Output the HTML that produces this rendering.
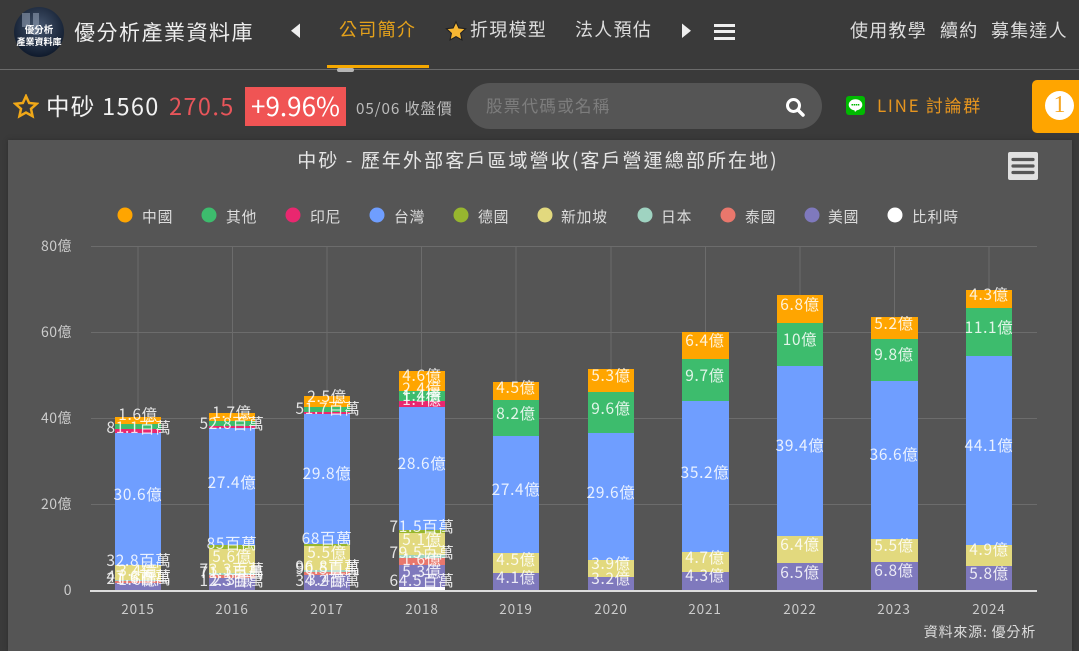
<!DOCTYPE html>
<html lang="zh-Hant"><head><meta charset="utf-8"><title>中砂</title>
<style>
*{box-sizing:border-box}
html,body{margin:0;padding:0;width:1079px;height:651px;overflow:hidden;background:#3a3a3a;}
.a{position:absolute;white-space:nowrap;line-height:1}
body{position:relative;font-family:"Noto Sans CJK TC","Liberation Sans",sans-serif}
svg text{font-family:"Noto Sans CJK TC","Liberation Sans",sans-serif}
</style></head><body>
<svg class="a" style="left:13px;top:7px" width="52" height="50" viewBox="0 0 52 50">
<defs><radialGradient id="g" cx="50%" cy="40%" r="60%"><stop offset="0" stop-color="#46566f"/><stop offset="1" stop-color="#0f1a2c"/></radialGradient></defs>
<circle cx="26" cy="25" r="25" fill="url(#g)"/><path d="M9 20h8v-14h-8zM20 28h6v-22h-6z" fill="#8f9db0" opacity=".6"/>
<text x="26" y="26" font-size="9.500" font-weight="700" fill="#fff" text-anchor="middle">優分析</text>
<text x="26" y="38" font-size="9" font-weight="700" fill="#fff" text-anchor="middle">產業資料庫</text></svg>
<div class="a" style="left:74px;top:22px;font-size:21px;letter-spacing:1.500px;color:#eee">優分析產業資料庫</div>
<svg class="a" style="left:290px;top:23px" width="11" height="16"><path d="M10 0.500V15L1 7.700z" fill="#eee"/></svg>
<div class="a" style="left:339px;top:20px;font-size:18px;letter-spacing:1.300px;color:#e4a11b">公司簡介</div>
<div class="a" style="left:327px;top:65px;width:102px;height:3px;background:#f5a800"></div>
<svg class="a" style="left:445px;top:20px" width="22" height="22" viewBox="0 0 24 24"><path d="M12 2l3.100 6.700 7.400.800-5.500 5 1.500 7.300L12 18.200l-6.500 3.600 1.500-7.300-5.500-5 7.400-.800z" fill="#f7b733" stroke="#222" stroke-width="1.200"/></svg>
<div class="a" style="left:470px;top:20px;font-size:18px;letter-spacing:1.300px;color:#ddd">折現模型</div>
<div class="a" style="left:575px;top:20px;font-size:18px;letter-spacing:1.300px;color:#ddd">法人預估</div>
<svg class="a" style="left:681px;top:23px" width="11" height="16"><path d="M1 0.500V15L10 7.700z" fill="#eee"/></svg>
<div class="a" style="left:714px;top:24px;width:21px;height:3px;background:#eee"></div>
<div class="a" style="left:714px;top:30px;width:21px;height:3px;background:#eee"></div>
<div class="a" style="left:714px;top:37px;width:21px;height:3px;background:#eee"></div>
<div class="a" style="left:850px;top:21px;font-size:18px;letter-spacing:1.200px;color:#ddd">使用教學</div>
<div class="a" style="left:940px;top:21px;font-size:18px;letter-spacing:1.200px;color:#ddd">續約</div>
<div class="a" style="left:991px;top:21px;font-size:18px;letter-spacing:1.200px;color:#ddd">募集達人</div>
<div class="a" style="left:0;top:69px;width:1079px;height:1px;background:#6b6b6b"></div>
<div class="a" style="left:337px;top:68px;width:17px;height:4px;border-radius:2px;background:#b5b5b5"></div>

<svg class="a" style="left:13px;top:94px" width="26" height="25" viewBox="0 0 24 24"><path d="M12 2l3 6.600 7.200.800-5.400 4.800 1.500 7.100L12 17.800l-6.300 3.500 1.500-7.100L1.800 9.400 9 8.600z" fill="none" stroke="#f0a818" stroke-width="2.400"/></svg>
<div class="a" style="left:46px;top:94px;font-size:23.500px;letter-spacing:1.300px;color:#f2f2f2">中砂 1560</div>
<div class="a" style="left:169px;top:94px;font-size:23.500px;letter-spacing:1.400px;color:#e8555a">270.5</div>
<div class="a" style="left:245px;top:87px;width:101px;height:39px;background:#f05454;color:#fff;font-size:26px;line-height:38px;text-align:center">+9.96%</div>
<div class="a" style="left:356px;top:101px;font-size:15.200px;letter-spacing:.9px;color:#bbb">05/06 收盤價</div>
<div class="a" style="left:467px;top:83px;width:355px;height:46px;border-radius:23px;background:#555"></div>
<div class="a" style="left:486px;top:97px;font-size:16.500px;letter-spacing:1.300px;color:#7d7d7d">股票代碼或名稱</div>
<svg class="a" style="left:785px;top:97px" width="20" height="20" viewBox="0 0 20 20"><circle cx="8.500" cy="8.500" r="6" fill="none" stroke="#fff" stroke-width="3"/><path d="M13 13l5 5" stroke="#fff" stroke-width="3.500" stroke-linecap="round"/></svg>
<svg class="a" style="left:846px;top:96px" width="19" height="19" viewBox="0 0 19 19"><rect width="19" height="19" rx="3" fill="#00b900"/><ellipse cx="9.500" cy="8.800" rx="6.800" ry="5.500" fill="#fff"/><path d="M8 13l1 3 3-3z" fill="#fff"/><path d="M5.500 8.800h8" stroke="#00b900" stroke-width="1.500" stroke-dasharray="1.500 .6"/></svg>
<div class="a" style="left:877px;top:96px;font-size:17px;letter-spacing:1.700px;color:#e6951f">LINE 討論群</div>
<div class="a" style="left:1032px;top:80px;width:47px;height:53px;border-radius:5px 0 0 5px;background:#ffa500"></div>
<div class="a" style="left:1045px;top:91px;width:29px;height:29px;border-radius:50%;background:#fff;color:#f5a623;font-size:24px;line-height:29px;text-align:center;font-family:'Liberation Serif',serif">1</div>

<div class="a" style="left:8px;top:140px;width:1064px;height:511px;background:#555;box-shadow:0 0 4px #2c2c2c"></div>
<svg class="a" style="left:0;top:0" width="1079" height="651" viewBox="0 0 1079 651">
<text x="538" y="167" font-size="19" letter-spacing="2.100" fill="#e6e6e6" text-anchor="middle">中砂 - 歷年外部客戶區域營收(客戶營運總部所在地)</text>
<rect x="1008" y="152" width="30" height="28" rx="2" fill="#e0e0e0"/>
<path d="M1013 159.500h20M1013 166h20M1013 172.500h20" stroke="#555" stroke-width="3.200" stroke-linecap="round"/>
<g font-size="14.800" fill="#ddd" letter-spacing=".8">
<circle cx="125" cy="215" r="7.500" fill="#ffa500"/><text x="142" y="222">中國</text>
<circle cx="209" cy="215" r="7.500" fill="#3dbc6d"/><text x="226" y="222">其他</text>
<circle cx="293" cy="215" r="7.500" fill="#e9276f"/><text x="310" y="222">印尼</text>
<circle cx="377" cy="215" r="7.500" fill="#6f9eff"/><text x="394" y="222">台灣</text>
<circle cx="461" cy="215" r="7.500" fill="#97b62f"/><text x="478" y="222">德國</text>
<circle cx="545" cy="215" r="7.500" fill="#e2d97e"/><text x="561" y="222">新加坡</text>
<circle cx="645" cy="215" r="7.500" fill="#9fd3c1"/><text x="661" y="222">日本</text>
<circle cx="728" cy="215" r="7.500" fill="#e9776c"/><text x="745" y="222">泰國</text>
<circle cx="812" cy="215" r="7.500" fill="#7f79bd"/><text x="828" y="222">美國</text>
<circle cx="895" cy="215" r="7.500" fill="#fff"/><text x="912" y="222">比利時</text>
</g>
<g stroke="#6c6c6c" stroke-width="1">
<path d="M91 246.500H1037M91 332.500H1037M91 418.500H1037M91 504.500H1037"/>
<path d="M138 246V590M232.500 246V590M327 246V590M421.500 246V590M516 246V590M611 246V590M705.500 246V590M800 246V590M894.500 246V590M989 246V590"/>
</g>
<g font-size="14" fill="#ccc" text-anchor="end" letter-spacing=".5">
<text x="72" y="251">80億</text><text x="72" y="337">60億</text><text x="72" y="423">40億</text><text x="72" y="509">20億</text><text x="72" y="595">0</text>
</g>
<g fill="#ffa500">
<rect x="115" y="417" width="46" height="7"/><rect x="209" y="413" width="46" height="8"/><rect x="304" y="396" width="46" height="11"/><rect x="399" y="371" width="46" height="20"/><rect x="493" y="382" width="46" height="18"/><rect x="588" y="369" width="46" height="23"/><rect x="682" y="332" width="47" height="27"/><rect x="777" y="295" width="46" height="28"/><rect x="871" y="317" width="47" height="22"/><rect x="966" y="290" width="46" height="18"/>
</g>
<g fill="#3dbc6d">
<rect x="115" y="424" width="46" height="5"/><rect x="209" y="421" width="46" height="5"/><rect x="304" y="407" width="46" height="5"/><rect x="399" y="391" width="46" height="10"/><rect x="493" y="400" width="46" height="36"/><rect x="588" y="392" width="46" height="41"/><rect x="682" y="359" width="47" height="42"/><rect x="777" y="323" width="46" height="43"/><rect x="871" y="339" width="47" height="42"/><rect x="966" y="308" width="46" height="48"/>
</g>
<g fill="#e9276f">
<rect x="115" y="429" width="46" height="4"/><rect x="209" y="426" width="46" height="2"/><rect x="304" y="412" width="46" height="2"/><rect x="399" y="401" width="46" height="6"/>
</g>
<g fill="#6f9eff">
<rect x="115" y="433" width="46" height="132"/><rect x="209" y="428" width="46" height="117"/><rect x="304" y="414" width="46" height="130"/><rect x="399" y="407" width="46" height="123"/><rect x="493" y="436" width="46" height="117"/><rect x="588" y="433" width="46" height="127"/><rect x="682" y="401" width="47" height="151"/><rect x="777" y="366" width="46" height="170"/><rect x="871" y="381" width="47" height="158"/><rect x="966" y="356" width="46" height="189"/>
</g>
<g fill="#97b62f"><rect x="209" y="545" width="46" height="4"/><rect x="304" y="544" width="46" height="2"/><rect x="399" y="530" width="46" height="3"/></g>
<g fill="#e2d97e">
<rect x="115" y="565" width="46" height="15"/><rect x="209" y="549" width="46" height="24"/><rect x="304" y="546" width="46" height="24"/><rect x="399" y="533" width="46" height="22"/><rect x="493" y="553" width="46" height="20"/><rect x="588" y="560" width="46" height="17"/><rect x="682" y="552" width="47" height="20"/><rect x="777" y="536" width="46" height="27"/><rect x="871" y="539" width="47" height="23"/><rect x="966" y="545" width="46" height="21"/>
</g>
<g fill="#9fd3c1"><rect x="115" y="580" width="46" height="1"/><rect x="209" y="573" width="46" height="2"/><rect x="304" y="570" width="46" height="2"/><rect x="399" y="555" width="46" height="3"/></g>
<g fill="#e9776c"><rect x="115" y="581" width="46" height="2"/><rect x="209" y="575" width="46" height="3"/><rect x="304" y="572" width="46" height="3"/><rect x="399" y="558" width="46" height="7"/></g>
<g fill="#7f79bd">
<rect x="115" y="583" width="46" height="7"/><rect x="209" y="578" width="46" height="12"/><rect x="304" y="575" width="46" height="15"/><rect x="399" y="565" width="46" height="22"/><rect x="493" y="573" width="46" height="17"/><rect x="588" y="577" width="46" height="13"/><rect x="682" y="572" width="47" height="18"/><rect x="777" y="563" width="46" height="27"/><rect x="871" y="562" width="47" height="28"/><rect x="966" y="566" width="46" height="24"/>
</g>
<rect x="399" y="587" width="46" height="3" fill="#fff"/>
<rect x="90" y="590" width="947" height="2" fill="#dcdcdc"/>
<g font-size="15.400" fill="#fff" fill-opacity=".85" text-anchor="middle" letter-spacing=".7">
<text x="138" y="420">1.6億</text><text x="139" y="433">81.1百萬</text><text x="138" y="500">30.6億</text><text x="139" y="566">32.8百萬</text><text x="138" y="576">3.4億</text><text x="139" y="582">47.6百萬</text><text x="139" y="584">21.6百萬</text><text x="138" y="585">1.6億</text>
<text x="232" y="418">1.7億</text><text x="232" y="429">52.8百萬</text><text x="232" y="488">27.4億</text><text x="232" y="549">85百萬</text><text x="232" y="562">5.6億</text><text x="232" y="575">73.3百萬</text><text x="232" y="578">71.1百萬</text><text x="232" y="586">12.3百萬</text><text x="232" y="585">2.3億</text>
<text x="327" y="402">2.5億</text><text x="328" y="414">51.7百萬</text><text x="327" y="479">29.8億</text><text x="327" y="544">68百萬</text><text x="327" y="558">5.5億</text><text x="328" y="572">96.8百萬</text><text x="328" y="574">90.5百萬</text><text x="328" y="586">34.2百萬</text><text x="327" y="585">3.4億</text>
<text x="422" y="381">4.6億</text><text x="422" y="394">2.4億</text><text x="422" y="401">1.4億</text><text x="422" y="405">1.4億</text><text x="422" y="469">28.6億</text><text x="422" y="532">71.5百萬</text><text x="422" y="545">5.1億</text><text x="422" y="558">79.5百萬</text><text x="422" y="565">1.6億</text><text x="422" y="577">5.3億</text><text x="422" y="586">64.5百萬</text>
<text x="516" y="393">4.5億</text><text x="516" y="419">8.2億</text><text x="516" y="495">27.4億</text><text x="516" y="565">4.5億</text><text x="516" y="583">4.1億</text>
<text x="611" y="381">5.3億</text><text x="611" y="414">9.6億</text><text x="611" y="498">29.6億</text><text x="611" y="569">3.9億</text><text x="611" y="584">3.2億</text>
<text x="705" y="346">6.4億</text><text x="705" y="381">9.7億</text><text x="705" y="478">35.2億</text><text x="705" y="563">4.7億</text><text x="705" y="581">4.3億</text>
<text x="800" y="310">6.8億</text><text x="800" y="345">10億</text><text x="800" y="451">39.4億</text><text x="800" y="550">6.4億</text><text x="800" y="578">6.5億</text>
<text x="894" y="329">5.2億</text><text x="894" y="360">9.8億</text><text x="894" y="460">36.6億</text><text x="894" y="551">5.5億</text><text x="894" y="576">6.8億</text>
<text x="989" y="300">4.3億</text><text x="989" y="333">11.1億</text><text x="989" y="451">44.1億</text><text x="989" y="555">4.9億</text><text x="989" y="579">5.8億</text>
</g>
<g font-size="13.500" fill="#ccc" text-anchor="middle" letter-spacing=".9">
<text x="138" y="614">2015</text><text x="232" y="614">2016</text><text x="327" y="614">2017</text><text x="422" y="614">2018</text><text x="516" y="614">2019</text><text x="611" y="614">2020</text><text x="705" y="614">2021</text><text x="800" y="614">2022</text><text x="894" y="614">2023</text><text x="989" y="614">2024</text>
</g>
<text x="1036" y="637" font-size="14" letter-spacing=".8" fill="#ddd" text-anchor="end">資料來源: 優分析</text>
</svg>
</body></html>
